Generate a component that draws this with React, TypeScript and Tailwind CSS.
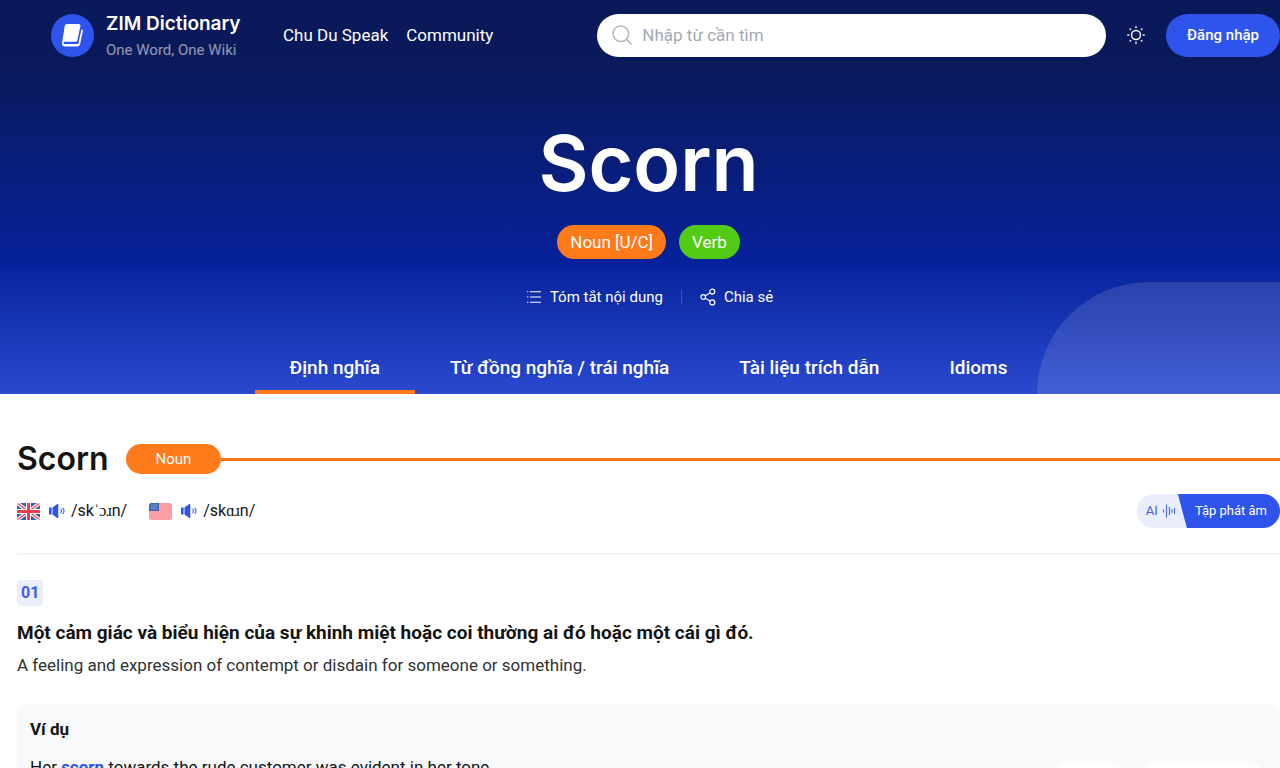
import React from "react";

const tabs = ["Định nghĩa", "Từ đồng nghĩa / trái nghĩa", "Tài liệu trích dẫn", "Idioms"];

function BookLogo() {
  return (
    <svg viewBox="0 0 43 43" className="size-[43px] shrink-0" aria-hidden="true">
      <circle cx="21.5" cy="21.5" r="21.5" fill="#2f54eb" />
      <path
        d="M16.2 10h11.4c1.3 0 2 .9 1.8 2.1l-3 14.1c-.2 1-.9 1.5-1.8 1.5H14.2c-1 0-1.7.5-1.7 1.2 0 .8.5 1.2 1.5 1.2h11.9c1 0 1.5-.5 1.7-1.5l2.9-13.4c1 .3 1.6 1.2 1.3 2.3l-2.7 12.6c-.3 1.5-1.3 2.4-2.8 2.4H14.2c-2.3 0-3.6-1.7-3.1-3.8l2.6-16.6c.2-1.3 1.1-2.1 2.5-2.1z"
        fill="white"
      />
    </svg>
  );
}

function SearchIcon() {
  return (
    <svg viewBox="0 0 20 20" className="size-5 shrink-0" fill="none" stroke="#b4b7bd" strokeWidth="1.5" aria-hidden="true">
      <circle cx="8.8" cy="8.8" r="7.8" />
      <path d="m14.3 14.3 5.2 5.2" />
    </svg>
  );
}

function SunIcon() {
  return (
    <svg viewBox="0 0 18 18" className="size-[18px]" fill="none" stroke="white" strokeWidth="1.4" strokeLinecap="round" aria-hidden="true">
      <circle cx="9" cy="9" r="4.5" />
      <path d="M9 .8v1M9 16.2v1M.8 9h1M16.2 9h1M3.1 3.1l.5.5M14.4 14.4l.5.5M3.1 14.9l.5-.5M14.4 3.6l.5-.5" />
    </svg>
  );
}

function ListIcon() {
  return (
    <svg viewBox="0 0 16 16" className="size-4" fill="none" stroke="white" strokeWidth="1.1" aria-hidden="true">
      <path d="M4 2.8h11M4 8h11M4 13.2h11M1 2.8h1.4M1 8h1.4M1 13.2h1.4" />
    </svg>
  );
}

function ShareIcon() {
  return (
    <svg viewBox="0 0 16 18" className="h-[18px] w-4" fill="none" stroke="white" strokeWidth="1.2" aria-hidden="true">
      <circle cx="3.2" cy="9" r="2.3" />
      <circle cx="12.3" cy="3.6" r="2.5" />
      <circle cx="12.3" cy="14.4" r="2.5" />
      <path d="m5.2 7.8 4.9-2.9M5.2 10.2l4.9 2.9" />
    </svg>
  );
}

function SpeakerIcon() {
  return (
    <svg viewBox="0 0 16 16" className="size-4" aria-hidden="true">
      <path d="M0 4.6h2.6v6.8H0zM3.5 4.6 8.3 1h1v14h-1l-4.8-3.6z" fill="#2f54eb" />
      <path d="M11.6 5.8c.9 1.2.9 3.2 0 4.4M13.6 4.8c1.6 1.8 1.6 4.6 0 6.4" fill="none" stroke="#4f6def" strokeWidth="1.2" />
    </svg>
  );
}

function UkFlag() {
  return (
    <svg viewBox="0 0 23 17" className="h-[17px] w-[23px]" role="img" aria-label="UK">
      <clipPath id="uk"><rect width="23" height="17" rx="2.5" /></clipPath>
      <g clipPath="url(#uk)">
        <path d="M0 0h23v17H0z" fill="#3f5ba9" />
        <path d="m0 0 23 17M23 0 0 17" stroke="white" strokeWidth="3.6" />
        <path d="m0 0 23 17M23 0 0 17" stroke="#ee4450" strokeWidth="1.3" />
        <path d="M11.5 0v17M0 8.5h23" stroke="white" strokeWidth="5" />
        <path d="M11.5 0v17M0 8.5h23" stroke="#f0404a" strokeWidth="3" />
      </g>
    </svg>
  );
}

function UsFlag() {
  return (
    <svg viewBox="0 0 23 17" className="h-[17px] w-[23px]" role="img" aria-label="US">
      <clipPath id="us"><rect width="23" height="17" rx="2.5" /></clipPath>
      <g clipPath="url(#us)">
        <path d="M0 0h23v17H0z" fill="#fb9da2" />
        <path d="M0 0h10v8H0z" fill="#3f66b5" />
        <path d="M1.5 2h7M1.5 4h7M1.5 6h7" stroke="#7f9cd6" strokeWidth=".9" />
      </g>
    </svg>
  );
}

function WaveIcon() {
  return (
    <svg viewBox="0 0 14 14" className="size-[14px]" stroke="#5570e8" strokeWidth="1.2" aria-hidden="true">
      <path d="M1.5 5.5v3M4.5.5v13M7.5 3v8M10 5.3v3.4M12.5 4v6" />
    </svg>
  );
}

function Pronunciation({ flag, label, text }: { flag: React.ReactNode; label: string; text: string }) {
  return (
    <div className="flex items-center">
      {flag}
      <button type="button" aria-label={label} className="mr-1.5 ml-[9px]">
        <SpeakerIcon />
      </button>
      <span className="font-['Roboto','Liberation_Serif',serif] text-base leading-6">{text}</span>
    </div>
  );
}

export default function App() {
  return (
    <div className="h-screen overflow-hidden bg-white font-['Roboto','Noto_Sans',sans-serif] text-[17px] leading-6 text-[#141414]">
      <div className="relative overflow-hidden bg-linear-to-b from-[#0a1959] from-15% via-[#06219a] via-66% to-[#2a49d0] text-white">
        <div className="absolute top-[282px] left-[81%] h-60 w-[480px] rounded-tl-[112px] bg-white/12" />
        <header className="relative flex h-[70px] items-center pl-[51px]">
          <a href="#" className="flex items-center gap-3">
            <BookLogo />
            <span className="flex w-[134px] flex-col pt-0.5 whitespace-nowrap">
              <span className="font-['Inter',sans-serif] text-[19px] leading-7 font-semibold">ZIM Dictionary</span>
              <span className="text-[15px] leading-6 text-white/55">One Word, One Wiki</span>
            </span>
          </a>
          <nav className="ml-[43px] flex gap-[18px] whitespace-nowrap">
            <a href="#">Chu Du Speak</a>
            <a href="#">Community</a>
          </nav>
          <label className="ml-[104px] flex h-[43px] flex-1 items-center gap-2.5 rounded-full bg-white px-[15px]">
            <SearchIcon />
            <input
              type="search"
              aria-label="Nhập từ cần tìm"
              placeholder="Nhập từ cần tìm"
              className="min-w-0 flex-1 bg-transparent text-gray-800 outline-none placeholder:text-[#a3a9b3]"
            />
          </label>
          <button type="button" aria-label="Theme" className="mx-[21px]">
            <SunIcon />
          </button>
          <button type="button" className="h-[43px] rounded-full bg-[#2f54eb] px-[21px] text-[15px] font-medium whitespace-nowrap">
            Đăng nhập
          </button>
        </header>

        <div className="relative flex flex-col items-center pt-[45px] pl-[17px]">
          <h1 className="font-['Inter',sans-serif] text-[77px] leading-[96px] font-semibold">Scorn</h1>
          <div className="mt-[14px] flex gap-[13px]">
            <span className="rounded-full bg-[#ff7a1a] px-[13px] py-[5px]">Noun [U/C]</span>
            <span className="rounded-full bg-[#52cb14] px-[13px] py-[5px]">Verb</span>
          </div>
          <div className="mt-6 flex items-center gap-[18px] pl-0.5 text-[15px] leading-7">
            <button type="button" className="flex items-center gap-2">
              <ListIcon />
              Tóm tắt nội dung
            </button>
            <span className="h-3.5 w-px bg-white/20" />
            <button type="button" className="flex items-center gap-2">
              <ShareIcon />
              Chia sẻ
            </button>
          </div>
        </div>

        <nav className="relative mt-8 flex justify-center pl-[17px]">
          {tabs.map((tab, i) => (
            <a
              key={tab}
              href="#"
              className={
                i === 0
                  ? "border-b-4 border-[#ff7a1a] px-[35px] pt-[11px] pb-2 text-[19px] leading-7 font-medium"
                  : "border-b-4 border-transparent px-[35px] pt-[11px] pb-2 text-[19px] leading-7 font-medium"
              }
            >
              {tab}
            </a>
          ))}
        </nav>
      </div>

      <main className="pl-[17px]">
        <div className="flex items-center pt-[45px]">
          <h2 className="mr-[17px] font-['Inter',sans-serif] text-[32px] leading-10 font-semibold">Scorn</h2>
          <span className="rounded-full bg-[#ff7a1a] px-[30px] py-[3px] text-[15px] leading-6 text-white">Noun</span>
          <span className="h-[3px] flex-1 bg-[#f5761a]" />
        </div>

        <div className="mt-[15px] flex items-center justify-between border-b-2 border-[#f2f2f2] pb-[25px]">
          <div className="flex gap-[22px]">
            <Pronunciation flag={<UkFlag />} label="Nghe giọng Anh" text="/skˈɔɹn/" />
            <Pronunciation flag={<UsFlag />} label="Nghe giọng Mỹ" text="/skɑɹn/" />
          </div>
          <button type="button" className="flex h-[34px] overflow-hidden rounded-full bg-[#e9edfc] text-[13px]">
            <span className="flex h-full items-center gap-1 pr-0.5 pl-[9px] text-[#4160e4]">
              AI
              <WaveIcon />
            </span>
            <span className="flex h-full items-center bg-[#2f54eb] pr-[13px] pl-[17px] text-white [clip-path:polygon(0_0,100%_0,100%_100%,9px_100%)]">
              Tập phát âm
            </span>
          </button>
        </div>

        <section className="pt-[25px]">
          <span className="inline-block rounded-sm bg-[#e9edfc] px-1 py-px text-base leading-6 font-bold text-[#4160e4]">01</span>
          <h3 className="mt-[11px] text-[19px] leading-8 font-bold">
            Một cảm giác và biểu hiện của sự khinh miệt hoặc coi thường ai đó hoặc một cái gì đó.
          </h3>
          <p className="leading-8 text-[#303236]">
            A feeling and expression of contempt or disdain for someone or something.
          </p>
          <div className="mt-[23px] rounded-xl bg-[#f7f9fb] px-[13px] pt-[11px] pb-6">
            <h4 className="leading-7 font-bold">Ví dụ</h4>
            <div className="mt-[10px] flex items-start justify-between">
              <p className="leading-7">
                Her <b className="text-[#2f54eb]">scorn</b> towards the rude customer was evident in her tone.
              </p>
              <div className="mt-[10px] flex gap-3">
                <button type="button" aria-label="Nghe" className="h-[34px] w-[76px] rounded-full bg-white" />
                <button type="button" aria-label="Luyện nói" className="h-[34px] w-32 rounded-full bg-white" />
              </div>
            </div>
          </div>
        </section>
      </main>
    </div>
  );
}
